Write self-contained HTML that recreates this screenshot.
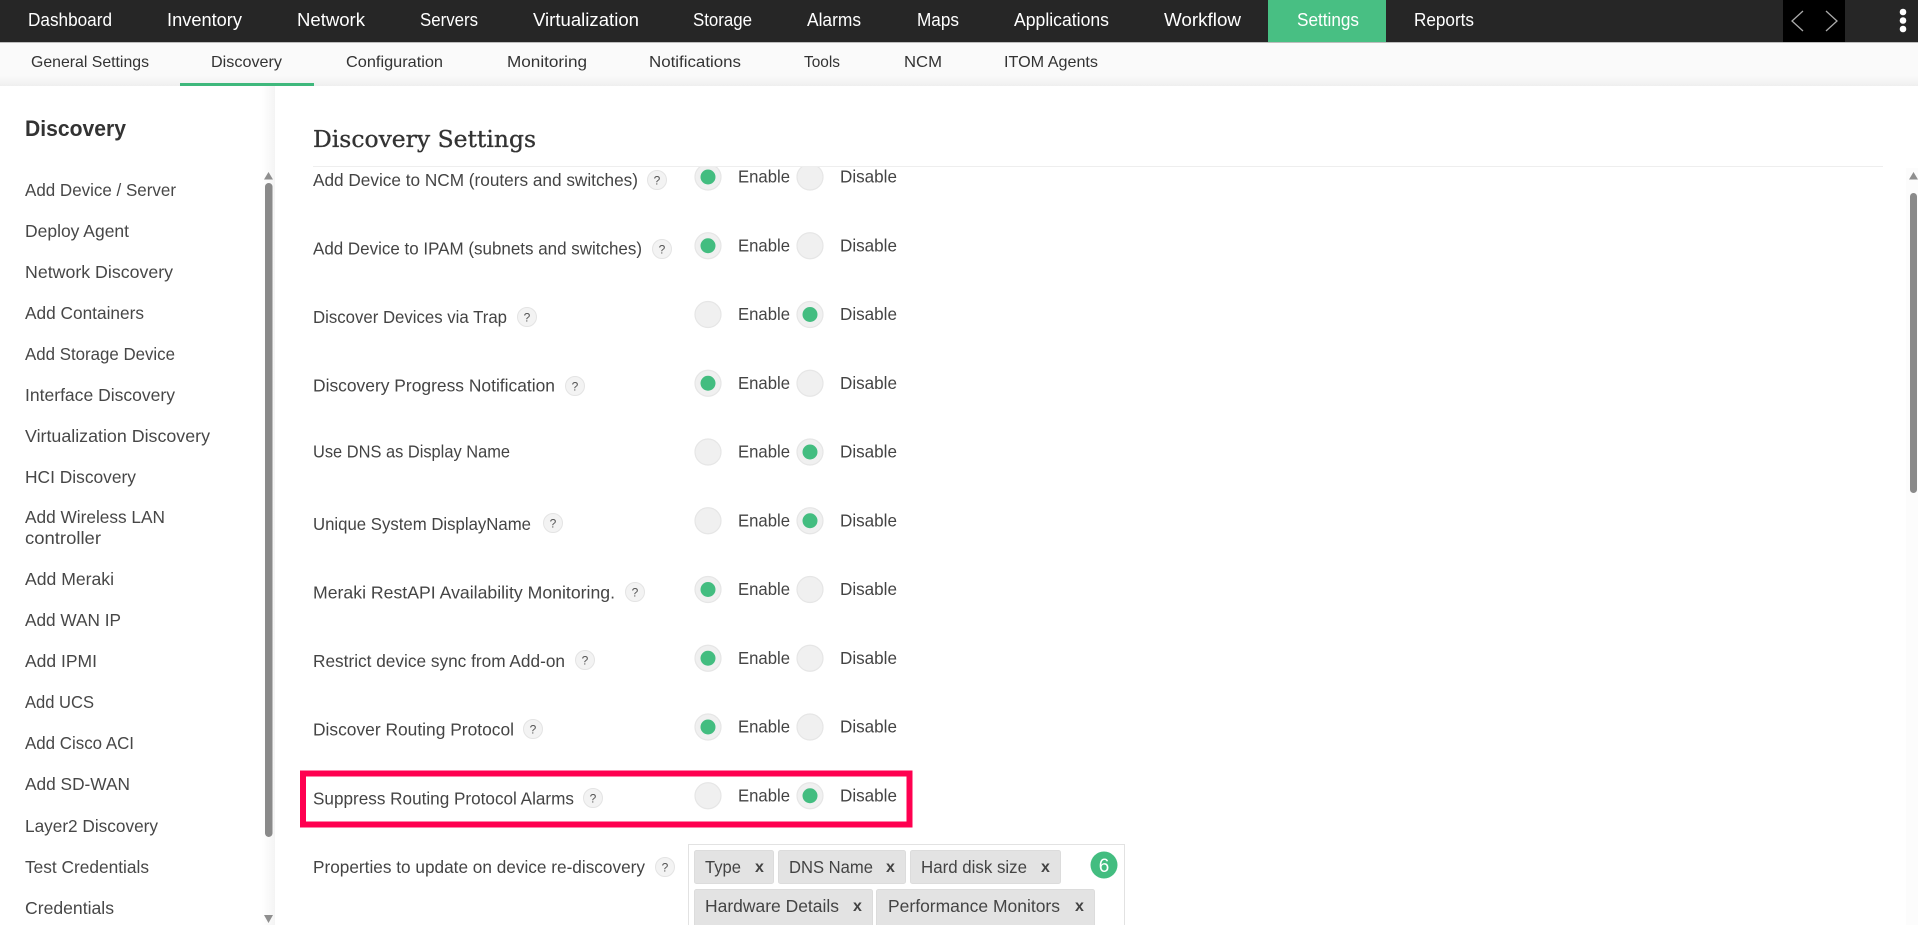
<!DOCTYPE html>
<html lang="en"><head><meta charset="utf-8"><title>Discovery Settings</title>
<style>
html,body{margin:0;padding:0;background:#fff;width:1918px;height:925px;overflow:hidden}
svg{display:block}
text{font-family:"Liberation Sans",sans-serif;font-size:17.5px;fill:#444}
.n text{font-size:18px;fill:#fff}
.s text{font-size:16px;fill:#333}
.side text{font-size:17.5px;fill:#474747}
.q text{font-size:12px;fill:#555;text-anchor:middle}
.q circle{fill:#f3f3f3;stroke:#e4e4e4;stroke-width:1}
.r circle{fill:#f0f0f0;stroke:#e6e6e6;stroke-width:1.2}
circle.d{fill:#43bd80!important;stroke:none!important}
.t rect{fill:#e3e3e3;stroke:#dcdcdc;stroke-width:1}
.t text{font-size:17.5px;fill:#444}
.t text.x{font-size:16px;font-weight:bold;fill:#444}
</style></head><body>
<svg width="1918" height="925" viewBox="0 0 1918 925" xmlns="http://www.w3.org/2000/svg">
<defs>
<linearGradient id="sh" x1="0" y1="0" x2="0" y2="1"><stop offset="0" stop-color="#fafafa"/><stop offset="1" stop-color="#efefef"/></linearGradient>
<linearGradient id="sd" x1="0" y1="0" x2="1" y2="0"><stop offset="0" stop-color="#ffffff"/><stop offset="1" stop-color="#f4f4f4"/></linearGradient>
</defs>
<rect width="1918" height="925" fill="#fff"/>

<!-- radios (clipped under heading area) -->
<g class="r">
<circle cx="708" cy="177" r="13"/><circle class="d" cx="708" cy="177" r="7.5"/><circle cx="810" cy="177" r="13"/>
<circle cx="708" cy="245.75" r="13"/><circle class="d" cx="708" cy="245.75" r="7.5"/><circle cx="810" cy="245.75" r="13"/>
<circle cx="708" cy="314.5" r="13"/><circle cx="810" cy="314.5" r="13"/><circle class="d" cx="810" cy="314.5" r="7.5"/>
<circle cx="708" cy="383.25" r="13"/><circle class="d" cx="708" cy="383.25" r="7.5"/><circle cx="810" cy="383.25" r="13"/>
<circle cx="708" cy="452" r="13"/><circle cx="810" cy="452" r="13"/><circle class="d" cx="810" cy="452" r="7.5"/>
<circle cx="708" cy="520.75" r="13"/><circle cx="810" cy="520.75" r="13"/><circle class="d" cx="810" cy="520.75" r="7.5"/>
<circle cx="708" cy="589.5" r="13"/><circle class="d" cx="708" cy="589.5" r="7.5"/><circle cx="810" cy="589.5" r="13"/>
<circle cx="708" cy="658.25" r="13"/><circle class="d" cx="708" cy="658.25" r="7.5"/><circle cx="810" cy="658.25" r="13"/>
<circle cx="708" cy="727" r="13"/><circle class="d" cx="708" cy="727" r="7.5"/><circle cx="810" cy="727" r="13"/>
<circle cx="708" cy="795.75" r="13"/><circle cx="810" cy="795.75" r="13"/><circle class="d" cx="810" cy="795.75" r="7.5"/>
</g>
<rect x="276" y="86" width="1620" height="80" fill="#fff"/>
<rect x="313" y="166" width="1570" height="1" fill="#eeeeee"/>

<!-- top nav -->
<rect width="1918" height="42" fill="#262626"/>
<rect y="42" width="1918" height="1" fill="#bdbdbd"/>
<rect x="1268" width="118" height="42" fill="#48bf83"/>
<rect x="1783" width="62" height="42" fill="#000"/>
<path d="M1803 11 L1792 21 L1803 31" fill="none" stroke="#aaaaaa" stroke-width="1.3"/>
<path d="M1826 11 L1837 21 L1826 31" fill="none" stroke="#aaaaaa" stroke-width="1.3"/>
<circle cx="1903" cy="12" r="3.300" fill="#fff"/><circle cx="1903" cy="20.500" r="3.300" fill="#fff"/><circle cx="1903" cy="29" r="3.300" fill="#fff"/>
<g class="n">
<text x="28" y="26" textLength="84" lengthAdjust="spacingAndGlyphs">Dashboard</text>
<text x="167" y="26" textLength="75" lengthAdjust="spacingAndGlyphs">Inventory</text>
<text x="297" y="26" textLength="68" lengthAdjust="spacingAndGlyphs">Network</text>
<text x="420" y="26" textLength="58" lengthAdjust="spacingAndGlyphs">Servers</text>
<text x="533" y="26" textLength="106" lengthAdjust="spacingAndGlyphs">Virtualization</text>
<text x="693" y="26" textLength="59" lengthAdjust="spacingAndGlyphs">Storage</text>
<text x="807" y="26" textLength="54" lengthAdjust="spacingAndGlyphs">Alarms</text>
<text x="917" y="26" textLength="42" lengthAdjust="spacingAndGlyphs">Maps</text>
<text x="1014" y="26" textLength="95" lengthAdjust="spacingAndGlyphs">Applications</text>
<text x="1164" y="26" textLength="77" lengthAdjust="spacingAndGlyphs">Workflow</text>
<text x="1297" y="26" textLength="62" lengthAdjust="spacingAndGlyphs">Settings</text>
<text x="1414" y="26" textLength="60" lengthAdjust="spacingAndGlyphs">Reports</text>
</g>

<!-- sub nav -->
<rect y="43" width="1918" height="33" fill="#fafafa"/>
<rect y="76" width="1918" height="10" fill="url(#sh)"/>
<rect x="180" y="83" width="134" height="3" fill="#3fb87c"/>
<g class="s">
<text x="31" y="67" textLength="118" lengthAdjust="spacingAndGlyphs">General Settings</text>
<text x="211" y="67" textLength="71" lengthAdjust="spacingAndGlyphs">Discovery</text>
<text x="346" y="67" textLength="97" lengthAdjust="spacingAndGlyphs">Configuration</text>
<text x="507" y="67" textLength="80" lengthAdjust="spacingAndGlyphs">Monitoring</text>
<text x="649" y="67" textLength="92" lengthAdjust="spacingAndGlyphs">Notifications</text>
<text x="804" y="67" textLength="36" lengthAdjust="spacingAndGlyphs">Tools</text>
<text x="904" y="67" textLength="38" lengthAdjust="spacingAndGlyphs">NCM</text>
<text x="1004" y="67" textLength="94" lengthAdjust="spacingAndGlyphs">ITOM Agents</text>
</g>

<!-- sidebar -->
<rect x="262" y="86" width="13" height="839" fill="url(#sd)"/>
<rect x="265" y="183" width="7.500" height="654" rx="3.700" fill="#8a8a8a"/>
<path d="M268.500 172 L273 179.500 L264 179.500 Z" fill="#8f8f8f"/>
<path d="M268.500 923 L273 915 L264 915 Z" fill="#8f8f8f"/>
<text x="25" y="136" textLength="101" lengthAdjust="spacingAndGlyphs" style="font-size:22px;font-weight:bold;fill:#333">Discovery</text>
<g class="side">
<text x="25" y="196" textLength="151" lengthAdjust="spacingAndGlyphs">Add Device / Server</text>
<text x="25" y="237" textLength="104" lengthAdjust="spacingAndGlyphs">Deploy Agent</text>
<text x="25" y="278" textLength="148" lengthAdjust="spacingAndGlyphs">Network Discovery</text>
<text x="25" y="319" textLength="119" lengthAdjust="spacingAndGlyphs">Add Containers</text>
<text x="25" y="360" textLength="150" lengthAdjust="spacingAndGlyphs">Add Storage Device</text>
<text x="25" y="401" textLength="150" lengthAdjust="spacingAndGlyphs">Interface Discovery</text>
<text x="25" y="442" textLength="185" lengthAdjust="spacingAndGlyphs">Virtualization Discovery</text>
<text x="25" y="483" textLength="111" lengthAdjust="spacingAndGlyphs">HCI Discovery</text>
<text x="25" y="523" textLength="140" lengthAdjust="spacingAndGlyphs">Add Wireless LAN</text>
<text x="25" y="544" textLength="76" lengthAdjust="spacingAndGlyphs">controller</text>
<text x="25" y="585" textLength="89" lengthAdjust="spacingAndGlyphs">Add Meraki</text>
<text x="25" y="626" textLength="96" lengthAdjust="spacingAndGlyphs">Add WAN IP</text>
<text x="25" y="667" textLength="72" lengthAdjust="spacingAndGlyphs">Add IPMI</text>
<text x="25" y="708" textLength="69" lengthAdjust="spacingAndGlyphs">Add UCS</text>
<text x="25" y="749" textLength="109" lengthAdjust="spacingAndGlyphs">Add Cisco ACI</text>
<text x="25" y="790" textLength="105" lengthAdjust="spacingAndGlyphs">Add SD-WAN</text>
<text x="25" y="832" textLength="133" lengthAdjust="spacingAndGlyphs">Layer2 Discovery</text>
<text x="25" y="873" textLength="124" lengthAdjust="spacingAndGlyphs">Test Credentials</text>
<text x="25" y="914" textLength="89" lengthAdjust="spacingAndGlyphs">Credentials</text>
</g>

<!-- main heading -->
<text x="313" y="147" textLength="223" lengthAdjust="spacingAndGlyphs" style="font-family:'DejaVu Serif',serif;font-size:23.500px;fill:#333;stroke:#333;stroke-width:.35">Discovery Settings</text>

<!-- labels -->
<g>
<text x="313" y="186" textLength="325" lengthAdjust="spacingAndGlyphs">Add Device to NCM (routers and switches)</text>
<text x="313" y="254.500" textLength="329" lengthAdjust="spacingAndGlyphs">Add Device to IPAM (subnets and switches)</text>
<text x="313" y="323" textLength="194" lengthAdjust="spacingAndGlyphs">Discover Devices via Trap</text>
<text x="313" y="391.500" textLength="242" lengthAdjust="spacingAndGlyphs">Discovery Progress Notification</text>
<text x="313" y="457.500" textLength="197" lengthAdjust="spacingAndGlyphs">Use DNS as Display Name</text>
<text x="313" y="530" textLength="218" lengthAdjust="spacingAndGlyphs">Unique System DisplayName</text>
<text x="313" y="598.500" textLength="302" lengthAdjust="spacingAndGlyphs">Meraki RestAPI Availability Monitoring.</text>
<text x="313" y="667" textLength="252" lengthAdjust="spacingAndGlyphs">Restrict device sync from Add-on</text>
<text x="313" y="735.500" textLength="201" lengthAdjust="spacingAndGlyphs">Discover Routing Protocol</text>
<text x="313" y="804.500" textLength="261" lengthAdjust="spacingAndGlyphs">Suppress Routing Protocol Alarms</text>
<text x="313" y="873" textLength="332" lengthAdjust="spacingAndGlyphs">Properties to update on device re-discovery</text>
</g>

<!-- help badges -->
<g class="q">
<circle cx="657" cy="180" r="9.5"/><text x="657" y="184.500">?</text>
<circle cx="662" cy="249" r="9.5"/><text x="662" y="253.500">?</text>
<circle cx="527" cy="317" r="9.500"/><text x="527" y="321.500">?</text>
<circle cx="575" cy="386" r="9.500"/><text x="575" y="390.500">?</text>
<circle cx="553" cy="523" r="9.500"/><text x="553" y="527.500">?</text>
<circle cx="635" cy="592" r="9.500"/><text x="635" y="596.500">?</text>
<circle cx="585" cy="660" r="9.500"/><text x="585" y="664.500">?</text>
<circle cx="533" cy="729" r="9.500"/><text x="533" y="733.500">?</text>
<circle cx="593" cy="798" r="9.500"/><text x="593" y="802.500">?</text>
<circle cx="665" cy="867" r="9.500"/><text x="665" y="871.500">?</text>
</g>

<!-- enable / disable text -->
<g>
<text x="738" y="182.500" textLength="52" lengthAdjust="spacingAndGlyphs">Enable</text><text x="840" y="182.500" textLength="57" lengthAdjust="spacingAndGlyphs">Disable</text>
<text x="738" y="251.250" textLength="52" lengthAdjust="spacingAndGlyphs">Enable</text><text x="840" y="251.250" textLength="57" lengthAdjust="spacingAndGlyphs">Disable</text>
<text x="738" y="320" textLength="52" lengthAdjust="spacingAndGlyphs">Enable</text><text x="840" y="320" textLength="57" lengthAdjust="spacingAndGlyphs">Disable</text>
<text x="738" y="388.750" textLength="52" lengthAdjust="spacingAndGlyphs">Enable</text><text x="840" y="388.750" textLength="57" lengthAdjust="spacingAndGlyphs">Disable</text>
<text x="738" y="457.500" textLength="52" lengthAdjust="spacingAndGlyphs">Enable</text><text x="840" y="457.500" textLength="57" lengthAdjust="spacingAndGlyphs">Disable</text>
<text x="738" y="526.250" textLength="52" lengthAdjust="spacingAndGlyphs">Enable</text><text x="840" y="526.250" textLength="57" lengthAdjust="spacingAndGlyphs">Disable</text>
<text x="738" y="595" textLength="52" lengthAdjust="spacingAndGlyphs">Enable</text><text x="840" y="595" textLength="57" lengthAdjust="spacingAndGlyphs">Disable</text>
<text x="738" y="663.750" textLength="52" lengthAdjust="spacingAndGlyphs">Enable</text><text x="840" y="663.750" textLength="57" lengthAdjust="spacingAndGlyphs">Disable</text>
<text x="738" y="732.500" textLength="52" lengthAdjust="spacingAndGlyphs">Enable</text><text x="840" y="732.500" textLength="57" lengthAdjust="spacingAndGlyphs">Disable</text>
<text x="738" y="801.250" textLength="52" lengthAdjust="spacingAndGlyphs">Enable</text><text x="840" y="801.250" textLength="57" lengthAdjust="spacingAndGlyphs">Disable</text>
</g>

<!-- highlight -->
<rect x="303" y="773.500" width="606.500" height="51" fill="none" stroke="#ff0050" stroke-width="6"/>

<!-- tag box -->
<rect x="688.500" y="844.500" width="436" height="90" fill="#fff" stroke="#e2e2e2"/>
<g class="t">
<rect x="694.500" y="850.500" width="79" height="33" rx="2"/><text x="705" y="873" textLength="36" lengthAdjust="spacingAndGlyphs">Type</text><text class="x" x="755" y="872">x</text>
<rect x="778.500" y="850.500" width="127" height="33" rx="2"/><text x="789" y="873" textLength="84" lengthAdjust="spacingAndGlyphs">DNS Name</text><text class="x" x="886" y="872">x</text>
<rect x="910.500" y="850.500" width="150" height="33" rx="2"/><text x="921" y="873" textLength="106" lengthAdjust="spacingAndGlyphs">Hard disk size</text><text class="x" x="1041" y="872">x</text>
<rect x="694.500" y="889.500" width="178" height="40" rx="2"/><text x="705" y="912" textLength="134" lengthAdjust="spacingAndGlyphs">Hardware Details</text><text class="x" x="853" y="911">x</text>
<rect x="876.500" y="889.500" width="218" height="40" rx="2"/><text x="888" y="912" textLength="172" lengthAdjust="spacingAndGlyphs">Performance Monitors</text><text class="x" x="1075" y="911">x</text>
</g>
<circle cx="1104" cy="865" r="13.500" fill="#43bd80"/>
<text x="1104" y="872" text-anchor="middle" style="font-size:19px;fill:#fff">6</text>

<!-- right scrollbar -->
<rect x="1906" y="168" width="12" height="757" fill="#fcfcfc"/>
<rect x="1910" y="193" width="7" height="300" rx="3.500" fill="#8a8a8a"/>
<path d="M1913.500 172 L1918 179.500 L1909 179.500 Z" fill="#8f8f8f"/>
</svg>
</body></html>
